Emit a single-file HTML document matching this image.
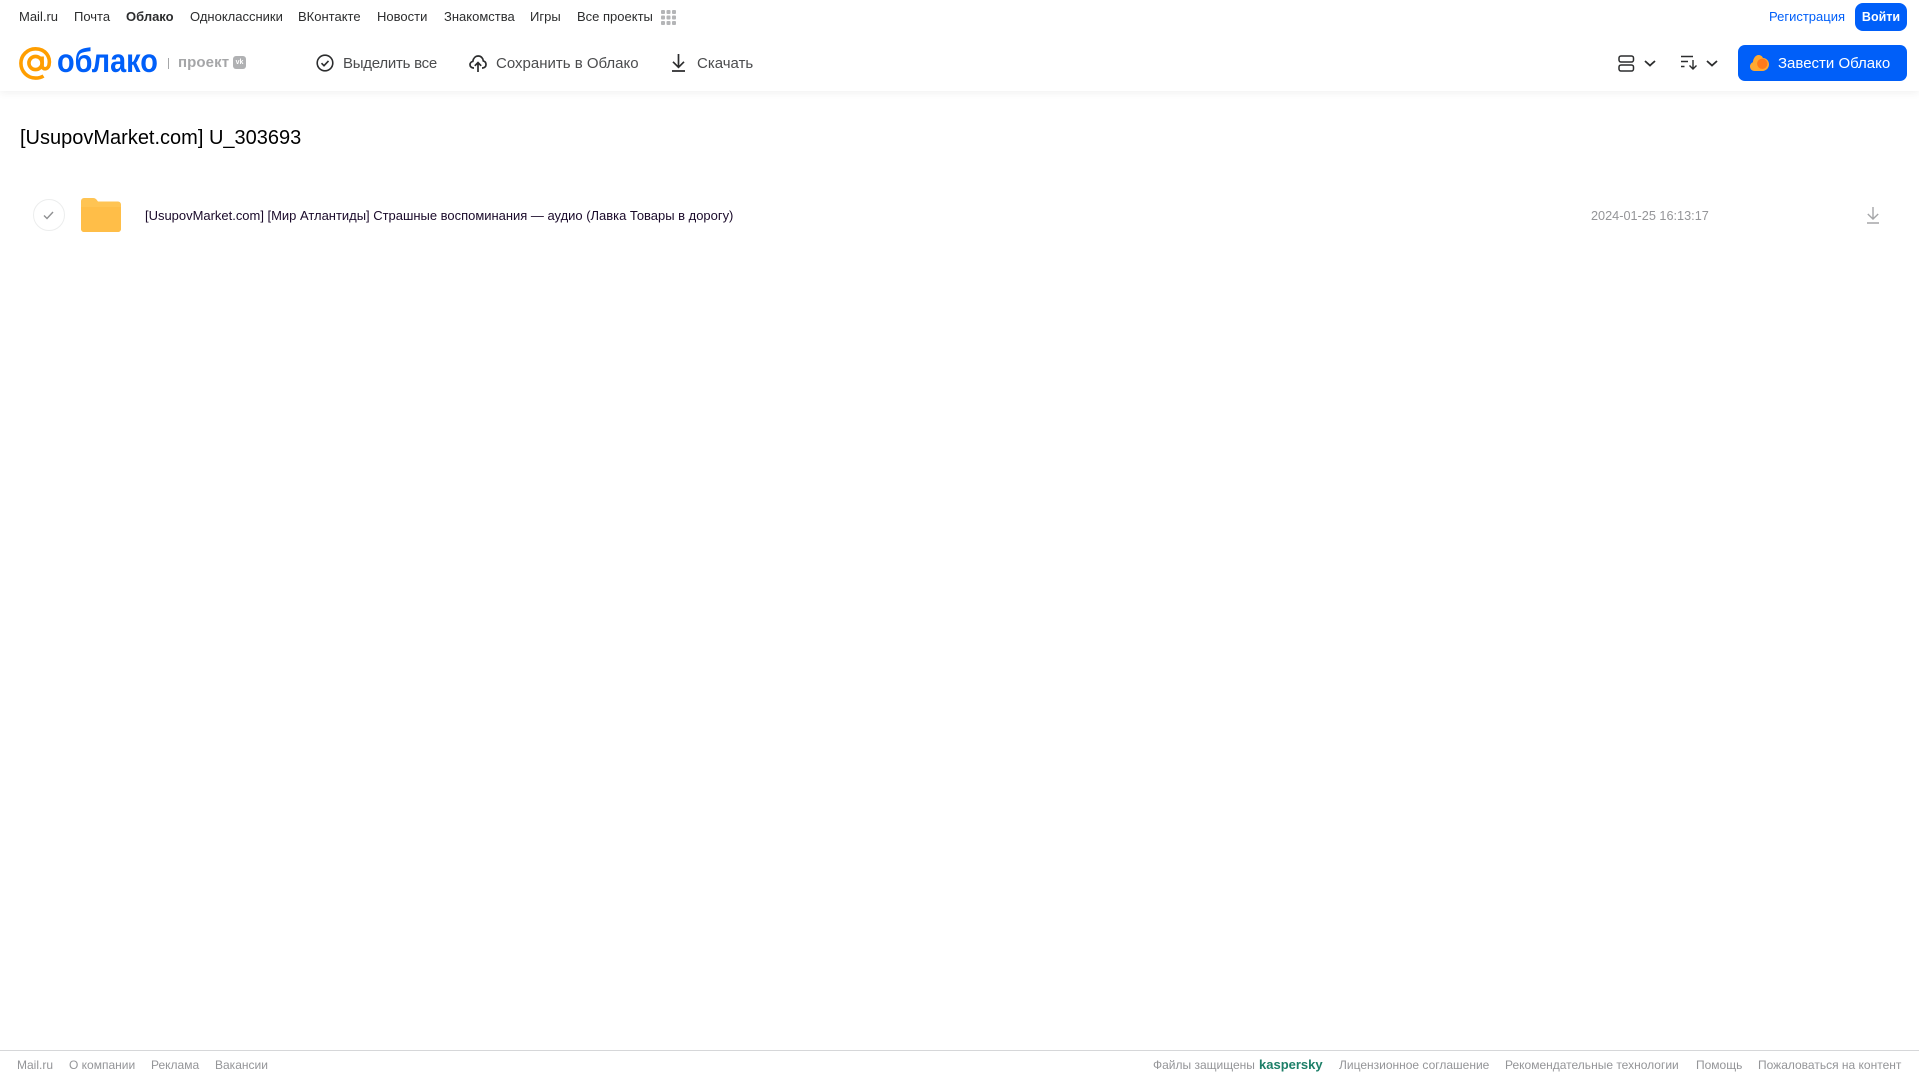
<!DOCTYPE html>
<html lang="ru"><head><meta charset="utf-8"><title>Облако</title>
<style>
html,body{margin:0;padding:0;background:#fff}
body{width:1919px;height:1079px;position:relative;overflow:hidden;font-family:"Liberation Sans",sans-serif}
.t{position:absolute;white-space:nowrap;line-height:20px}
.n{top:7px;font-size:13px;color:#2c2d2e}
.h{top:54px;font-size:15px;color:#4b4c4e}
.f{top:1055px;font-size:12px;color:#949598}
svg{position:absolute;overflow:visible}
</style></head><body>
<div style="position:absolute;left:0;top:0;width:1919px;height:91px;background:#fff;box-shadow:0 2px 8px rgba(0,0,0,.06)"></div>

<span class="t n" style="left:19px">Mail.ru</span>
<span class="t n" style="left:74px">Почта</span>
<span class="t n" style="left:126px;font-weight:bold">Облако</span>
<span class="t n" style="left:190px">Одноклассники</span>
<span class="t n" style="left:298px">ВКонтакте</span>
<span class="t n" style="left:377px">Новости</span>
<span class="t n" style="left:444px">Знакомства</span>
<span class="t n" style="left:530px">Игры</span>
<span class="t n" style="left:577px">Все проекты</span>
<svg style="left:661px;top:10px" width="15" height="15" fill="#b4b5b7"><rect width="4" height="4" rx="1"/><rect x="5.5" width="4" height="4" rx="1"/><rect x="11" width="4" height="4" rx="1"/><rect y="5.5" width="4" height="4" rx="1"/><rect x="5.5" y="5.5" width="4" height="4" rx="1"/><rect x="11" y="5.5" width="4" height="4" rx="1"/><rect y="11" width="4" height="4" rx="1"/><rect x="5.5" y="11" width="4" height="4" rx="1"/><rect x="11" y="11" width="4" height="4" rx="1"/></svg>

<span class="t n" style="left:1769px;color:#005ff9">Регистрация</span>
<div style="position:absolute;left:1855px;top:3px;width:52px;height:28px;border-radius:8px;background:#005ff9;color:#fff;font-size:12.5px;font-weight:bold;line-height:28px;text-align:center">Войти</div>

<!-- logo -->
<svg style="left:19px;top:47px" width="33" height="33" viewBox="0 0 33 33" fill="none" stroke="#ff9e00" stroke-width="3.6"><circle cx="16.5" cy="16" r="6.6"/><path d="M23.1 9.5v9.2c0 4 5.8 4.4 6.9-.5 1.9-8.3-3.6-16.4-13.5-16.4C8.4 1.8 1.9 8.300 1.900 16.300c0 8.200 6.500 14.800 14.600 14.800 3.200 0 5.800-.7 8-2.100"/></svg>
<span class="t" style="left:57px;top:43px;font-size:33px;line-height:36px;color:#005ff9;font-weight:bold;transform:scaleX(.875);transform-origin:0 50%">облако</span>
<div style="position:absolute;left:168px;top:58px;width:1px;height:11px;background:#a5a6a8"></div>
<span class="t" style="left:178px;top:53px;font-size:15px;color:#a5a6a8;font-weight:bold;letter-spacing:.1px">проект</span>
<div style="position:absolute;left:233px;top:56px;width:13px;height:13px;border-radius:3px;background:#b0b1b3;color:#fff;font-size:7px;font-weight:bold;line-height:13px;text-align:center">vk</div>

<!-- actions -->
<svg style="left:316px;top:54px" width="18" height="18" viewBox="0 0 18 18" fill="none" stroke="#2c2d2e" stroke-width="1.6"><circle cx="9" cy="9" r="7.800"/><path d="M5.500 9.200l2.500 2.500 4.500-4.800"/></svg>
<span class="t h" style="left:343px;letter-spacing:-.25px">Выделить все</span>
<svg style="left:469px;top:54px" width="18" height="18" viewBox="0 0 18 18" fill="none" stroke="#2c2d2e" stroke-width="1.700"><path d="M5 14H4.500C2.500 14 1 12.500 1 10.700 1 9 2.200 7.700 3.800 7.400 4.300 4.100 6.500 2 9.300 2c2.600 0 4.700 2 5 4.900 1.600.4 2.700 1.900 2.700 3.700 0 1.900-1.500 3.400-3.500 3.400H13"/><path d="M9 18V9M5.800 11.800L9 8.600l3.200 3.200"/></svg>
<span class="t h" style="left:496px">Сохранить в Облако</span>
<svg style="left:671px;top:54px" width="15" height="18" viewBox="0 0 15 18" fill="none" stroke="#2c2d2e" stroke-width="1.700"><path d="M7.500 0v13M2 7.800l5.500 5.500L13 7.800M1 17h13"/></svg>
<span class="t h" style="left:697px">Скачать</span>

<!-- right -->
<svg style="left:1618px;top:55px" width="17" height="17" viewBox="0 0 17 17" fill="none" stroke="#2c2d2e" stroke-width="1.500"><rect x="1" y="1" width="14.500" height="6" rx="2"/><rect x="1" y="10" width="14.500" height="6" rx="2"/></svg>
<svg style="left:1644px;top:60px" width="12" height="7" fill="none" stroke="#2c2d2e" stroke-width="1.800"><path d="M1 1l5 4.500L11 1"/></svg>
<svg style="left:1681px;top:55px" width="17" height="15" viewBox="0 0 17 15" fill="none" stroke="#2c2d2e" stroke-width="1.400"><path d="M0 1.500h12M0 6.500h7M0 11.500h3.500"/><path d="M12 5v9M8.500 10.500l3.500 3.500 3.500-3.500"/></svg>
<svg style="left:1706px;top:60px" width="12" height="7" fill="none" stroke="#2c2d2e" stroke-width="1.800"><path d="M1 1l5 4.500L11 1"/></svg>
<div style="position:absolute;left:1738px;top:45px;width:169px;height:36px;border-radius:7px;background:#005ff9"></div>
<svg style="left:1750px;top:55px" width="19" height="16" viewBox="0 0 19 16"><path d="M4.500 16C2 16 0 14 0 11.500 0 9.600 1.200 8 2.900 7.300 3.300 3.200 5.600 0 8.500 0c2.200 0 3.700 1.200 4.500 3 3.300.2 6 2.700 6 6.300C19 13 16.200 16 12.500 16z" fill="#ffa930"/><circle cx="12.300" cy="8.800" r="5.200" fill="#ff7a1a"/></svg>
<span class="t" style="left:1778px;top:54px;font-size:15px;color:#fff">Завести Облако</span>

<!-- title -->
<span class="t" style="left:20px;top:124px;font-size:20px;line-height:28px;color:#000">[UsupovMarket.com] U_303693</span>

<!-- row -->
<div style="position:absolute;left:33px;top:199px;width:30px;height:30px;border:1px solid #eceded;border-radius:50%"></div>
<svg style="left:43px;top:211px" width="11" height="9" fill="none" stroke="#8f9092" stroke-width="1.400"><path d="M1 4.500l3 3L10 1"/></svg>
<svg style="left:81px;top:198px" width="40" height="34" viewBox="0 0 40 34"><path d="M0 3a3 3 0 0 1 3-3h9c2 0 3 .8 4 2.200L17 3.500H37a3 3 0 0 1 3 3V31a3 3 0 0 1-3 3H3a3 3 0 0 1-3-3z" fill="#ffc453"/><path d="M0 9h40v22a3 3 0 0 1-3 3H3a3 3 0 0 1-3-3z" fill="#ffbe48"/></svg>
<span class="t" style="left:145px;top:206px;font-size:12.98px;color:#1a0a2a">[UsupovMarket.com] [Мир Атлантиды] Страшные воспоминания — аудио (Лавка Товары в дорогу)</span>
<span class="t" style="left:1591px;top:206px;font-size:12.7px;color:#949598">2024-01-25 16:13:17</span>
<svg style="left:1866px;top:207px" width="14" height="17" viewBox="0 0 14 17" fill="none" stroke="#a5a6a8" stroke-width="1.400"><path d="M7 0v12M1.800 7L7 12l5.200-5M1 16h12"/></svg>

<!-- footer -->
<div style="position:absolute;left:0;top:1050px;width:1919px;height:1px;background:#d6d7d9"></div>
<span class="t f" style="left:17px">Mail.ru</span>
<span class="t f" style="left:69px">О компании</span>
<span class="t f" style="left:151px">Реклама</span>
<span class="t f" style="left:215px">Вакансии</span>
<span class="t f" style="left:1153px">Файлы защищены</span>
<span class="t f" style="left:1259px;font-size:13px;font-weight:bold;color:#1d7f68">kaspersky</span>
<span class="t f" style="left:1339px">Лицензионное соглашение</span>
<span class="t f" style="left:1505px">Рекомендательные технологии</span>
<span class="t f" style="left:1696px">Помощь</span>
<span class="t f" style="left:1758px">Пожаловаться на контент</span>
</body></html>
